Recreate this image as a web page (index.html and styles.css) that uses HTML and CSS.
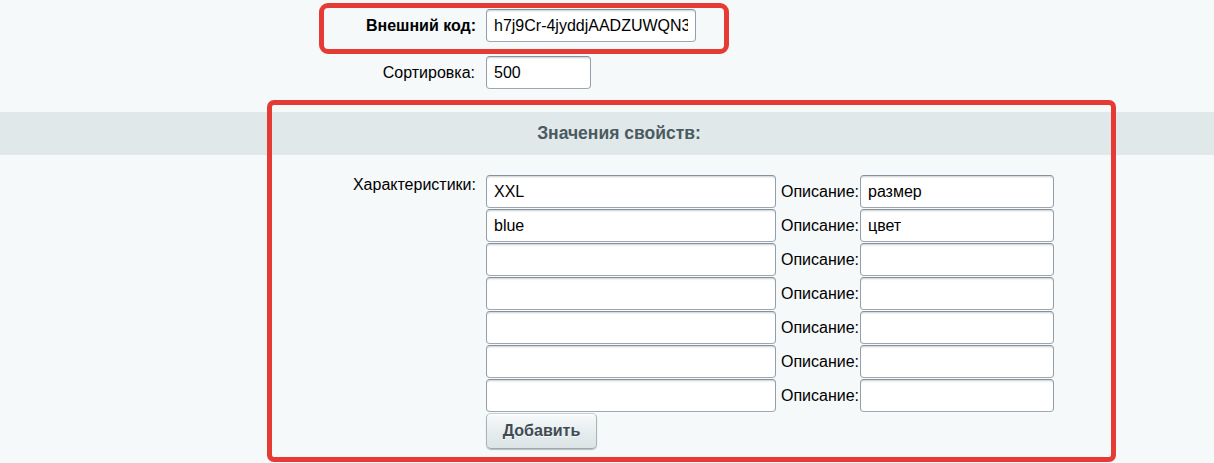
FILE: index.html
```html
<!DOCTYPE html>
<html lang="ru">
<head>
<meta charset="utf-8">
<title>Редактирование элемента</title>
<link rel="stylesheet" href="styles.css">
</head>
<body>
<div class="page">
  <div class="field field-first">
    <div class="label label-bold">Внешний код:</div>
    <div class="control"><input class="inp inp-code" type="text" value="h7j9Cr-4jyddjAADZUWQN3"></div>
  </div>
  <div class="field field-sort">
    <div class="label">Сортировка:</div>
    <div class="control"><input class="inp inp-sort" type="text" value="500"></div>
  </div>

  <div class="band">Значения свойств:</div>

  <div class="props">
    <div class="label label-top">Характеристики:</div>
    <div class="prop-list">
      <div class="prop-row"><input class="inp inp-val" type="text" value="XXL"><span class="desc-label">Описание:</span><input class="inp inp-desc" type="text" value="размер"></div>
      <div class="prop-row"><input class="inp inp-val" type="text" value="blue"><span class="desc-label">Описание:</span><input class="inp inp-desc" type="text" value="цвет"></div>
      <div class="prop-row"><input class="inp inp-val" type="text" value=""><span class="desc-label">Описание:</span><input class="inp inp-desc" type="text" value=""></div>
      <div class="prop-row"><input class="inp inp-val" type="text" value=""><span class="desc-label">Описание:</span><input class="inp inp-desc" type="text" value=""></div>
      <div class="prop-row"><input class="inp inp-val" type="text" value=""><span class="desc-label">Описание:</span><input class="inp inp-desc" type="text" value=""></div>
      <div class="prop-row"><input class="inp inp-val" type="text" value=""><span class="desc-label">Описание:</span><input class="inp inp-desc" type="text" value=""></div>
      <div class="prop-row"><input class="inp inp-val" type="text" value=""><span class="desc-label">Описание:</span><input class="inp inp-desc" type="text" value=""></div>
      <div class="btn-row"><button class="btn" type="button">Добавить</button></div>
    </div>
  </div>

  <div class="mark mark-code"></div>
  <div class="mark mark-props"></div>
</div>
</body>
</html>
```

FILE: styles.css
```css
html, body {
  margin: 0;
  padding: 0;
  background: #f5f9f9;
}
body {
  font-family: "Liberation Sans", Arial, sans-serif;
  font-size: 16px;
  color: #000;
  overflow: hidden;
}
.page {
  position: relative;
  width: 1214px;
  height: 463px;
}
.field {
  display: grid;
  grid-template-columns: 486px auto;
  align-items: center;
}
.field-first {
  padding-top: 9px;
}
.field-sort {
  margin-top: 14px;
}
.label {
  text-align: right;
  padding-right: 11px;
  color: #000;
  font-size: 16px;
}
.label-bold {
  font-weight: bold;
  padding-right: 10px;
}
.label-top {
  align-self: start;
  padding-top: 1px;
  padding-right: 10px;
}
.inp {
  box-sizing: border-box;
  height: 33px;
  margin: 0;
  padding: 0 7px;
  font-family: "Liberation Sans", Arial, sans-serif;
  font-size: 16px;
  color: #000;
  background: #fff;
  border: 1px solid;
  border-color: #87919c #959ea9 #9ea7b1 #959ea9;
  border-radius: 4px;
  box-shadow: 0 1px 0 0 rgba(255,255,255,0.3), inset 0 2px 2px -1px rgba(180,188,191,0.7);
  outline: none;
}
.inp-code {
  width: 210px;
}
.inp-sort {
  width: 105px;
}
.band {
  margin-top: 23px;
  height: 43px;
  background: #e0e8ea;
  display: flex;
  align-items: center;
  justify-content: center;
  padding-left: 24px;
  font-weight: bold;
  font-size: 17.5px;
  color: #4a5a60;
}
.props {
  display: grid;
  grid-template-columns: 486px auto;
  padding-top: 20px;
}
.prop-list {
  display: flex;
  flex-direction: column;
  gap: 1px;
}
.prop-row {
  display: flex;
  align-items: center;
}
.inp-val {
  width: 290px;
}
.desc-label {
  width: 84px;
  padding-left: 5px;
  box-sizing: border-box;
  white-space: nowrap;
}
.inp-desc {
  width: 194px;
}
.btn {
  box-sizing: border-box;
  width: 111px;
  height: 36px;
  padding: 0;
  font-family: "Liberation Sans", Arial, sans-serif;
  font-size: 16px;
  font-weight: bold;
  color: #3f4b54;
  border: 1px solid;
  border-color: #c4ced2 #a9b4b8 #9fa9ad #a9b4b8;
  border-radius: 5px;
  background: linear-gradient(to bottom, #f8fafa 0%, #e9eef0 45%, #dce4e6 100%);
  box-shadow: 0 1px 1px rgba(0,0,0,0.25), inset 0 1px 0 #fff;
  text-shadow: 0 1px rgba(255,255,255,0.7);
}
.mark {
  position: absolute;
  box-sizing: border-box;
  border: 5px solid #e53b34;
  border-radius: 9px;
  pointer-events: none;
}
.mark-code {
  left: 319px;
  top: 3px;
  width: 410px;
  height: 51px;
}
.mark-props {
  left: 267px;
  top: 100px;
  width: 849px;
  height: 362px;
  border-radius: 7px;
}
```
